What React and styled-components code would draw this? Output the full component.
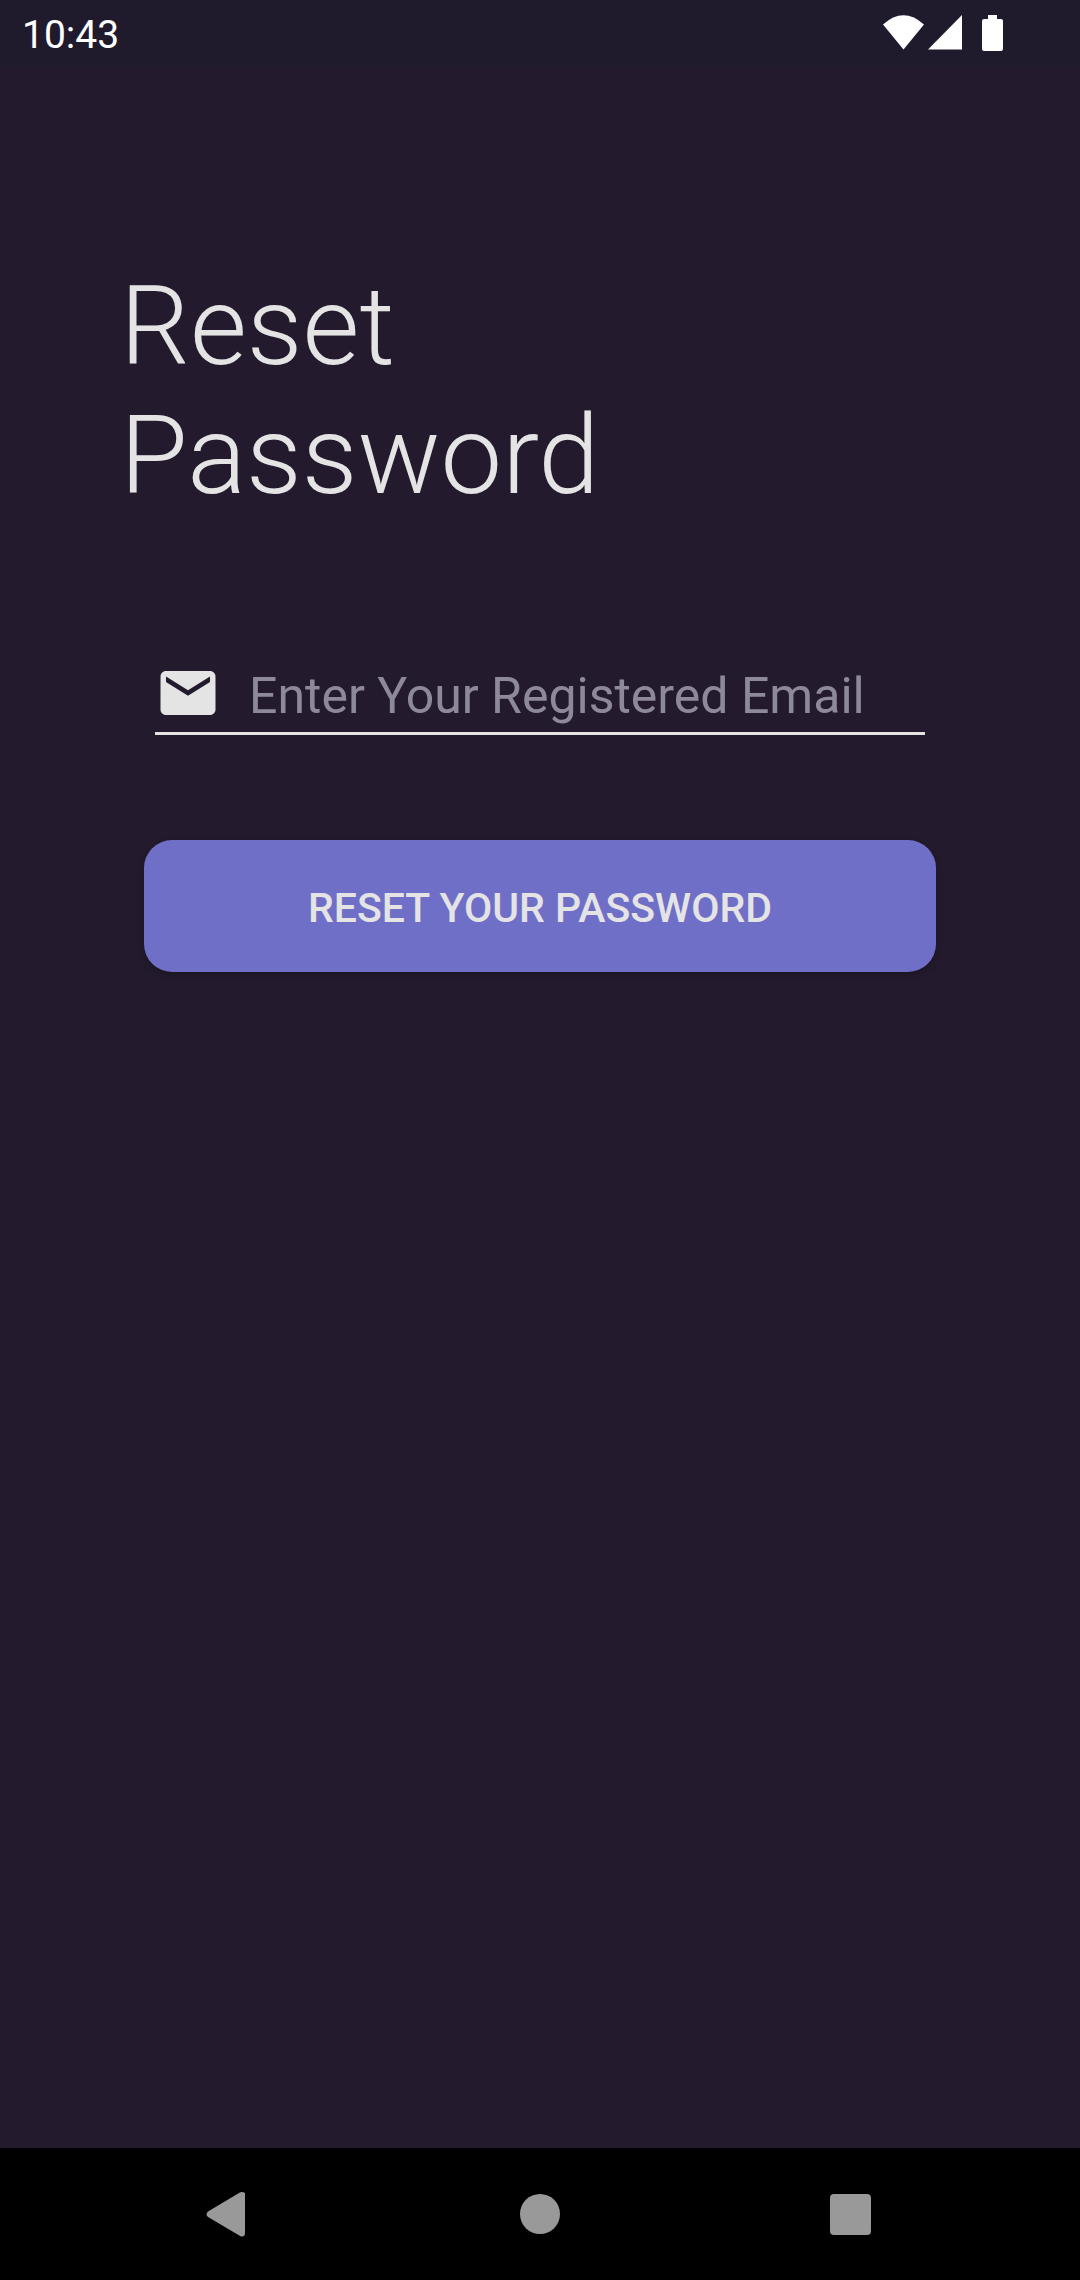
import React from "react";
import styled, { createGlobalStyle } from "styled-components";

const GlobalStyle = createGlobalStyle`
  *, *::before, *::after {
    box-sizing: border-box;
  }
  body {
    margin: 0;
    background: #231b2d;
    font-family: Roboto, "Noto Sans", sans-serif;
  }
`;

const Screen = styled.div`
  display: flex;
  flex-direction: column;
  min-height: 100vh;
  color: #e4e4e4;
`;

const StatusBar = styled.header`
  display: flex;
  align-items: center;
  justify-content: space-between;
  height: 66px;
  padding: 0 76px 0 22px;
  background: #1f1b2c;
  color: #fff;
`;

const Clock = styled.time`
  font-size: 39px;
  line-height: 48px;
  padding-top: 4px;
`;

const StatusIcons = styled.div`
  display: flex;
  align-items: center;

  svg {
    display: block;
    fill: #fff;
  }
`;

const Main = styled.main`
  flex: 1;
  padding: 196px 120px 0;
`;

const Title = styled.h1`
  margin: 0;
  font-size: 110px;
  line-height: 129px;
  font-weight: 300;
`;

const Form = styled.form`
  display: flex;
  flex-direction: column;
  padding: 140px 24px 0;
`;

const Field = styled.label`
  display: flex;
  align-items: flex-end;
  gap: 28px;
  margin: 0 11px;
  padding-bottom: 6px;
  border-bottom: 3px solid #e4e4e4;

  svg {
    display: block;
    flex: none;
    fill: #e4e4e4;
  }
`;

const EmailInput = styled.input`
  flex: 1;
  min-width: 0;
  height: 60px;
  padding: 0;
  border: 0;
  outline: 0;
  background: transparent;
  color: #e4e4e4;
  font: inherit;
  font-size: 50px;

  &::placeholder {
    color: #8d899b;
    opacity: 1;
  }
`;

const SubmitButton = styled.button`
  height: 132px;
  margin-top: 105px;
  padding: 4px 0 0;
  border: 0;
  border-radius: 28px;
  background: #706fc8;
  box-shadow: 0 3px 6px rgba(0, 0, 0, 0.25);
  color: #e4e4e4;
  font: inherit;
  font-size: 41px;
  font-weight: 500;
  text-transform: uppercase;
`;

const NavBar = styled.nav`
  display: flex;
  align-items: center;
  justify-content: center;
  gap: 230px;
  height: 132px;
  background: #000;
`;

const NavButton = styled.button`
  padding: 0;
  border: 0;
  background: transparent;

  svg {
    display: block;
    fill: #999;
  }
`;

export default function App() {
  return (
    <Screen>
      <GlobalStyle />
      <StatusBar>
        <Clock>10:43</Clock>
        <StatusIcons>
          <svg width="122" height="66" viewBox="0 0 122 66" aria-hidden="true">
            <path d="M1 24.500Q21.500 6 42 24.500L21.500 49.500Z" />
            <path d="M80 15V49.500H46Z" />
            <path d="M106 15h9v4h4q2 0 2 2v28q0 2-2 2h-17q-2 0-2-2V21q0-2 2-2h4Z" />
          </svg>
        </StatusIcons>
      </StatusBar>
      <Main>
        <Title>
          Reset
          <br />
          Password
        </Title>
        <Form onSubmit={(event) => event.preventDefault()}>
          <Field htmlFor="email">
            <svg width="66" height="66" viewBox="0 0 24 24" aria-hidden="true">
              <path d="M20 4H4c-1.100 0-1.990.9-1.990 2L2 18c0 1.100.9 2 2 2h16c1.100 0 2-.9 2-2V6c0-1.100-.9-2-2-2zm0 4l-8 5-8-5V6l8 5 8-5v2z" />
            </svg>
            <EmailInput
              id="email"
              type="email"
              aria-label="Enter Your Registered Email"
              placeholder="Enter Your Registered Email"
            />
          </Field>
          <SubmitButton type="submit">Reset Your Password</SubmitButton>
        </Form>
      </Main>
      <NavBar>
        <NavButton type="button" aria-label="Back">
          <svg width="80" height="80" viewBox="0 0 80 80">
            <path d="M18 37.500L49 18.900Q52 17 55 19V59Q55 63 51 62.500L18 43Q15 40.500 18 37.500Z" />
          </svg>
        </NavButton>
        <NavButton type="button" aria-label="Home">
          <svg width="80" height="80" viewBox="0 0 80 80">
            <circle cx="40" cy="40" r="20" />
          </svg>
        </NavButton>
        <NavButton type="button" aria-label="Overview">
          <svg width="80" height="80" viewBox="0 0 80 80">
            <rect x="20" y="20" width="41" height="41" rx="4" />
          </svg>
        </NavButton>
      </NavBar>
    </Screen>
  );
}
